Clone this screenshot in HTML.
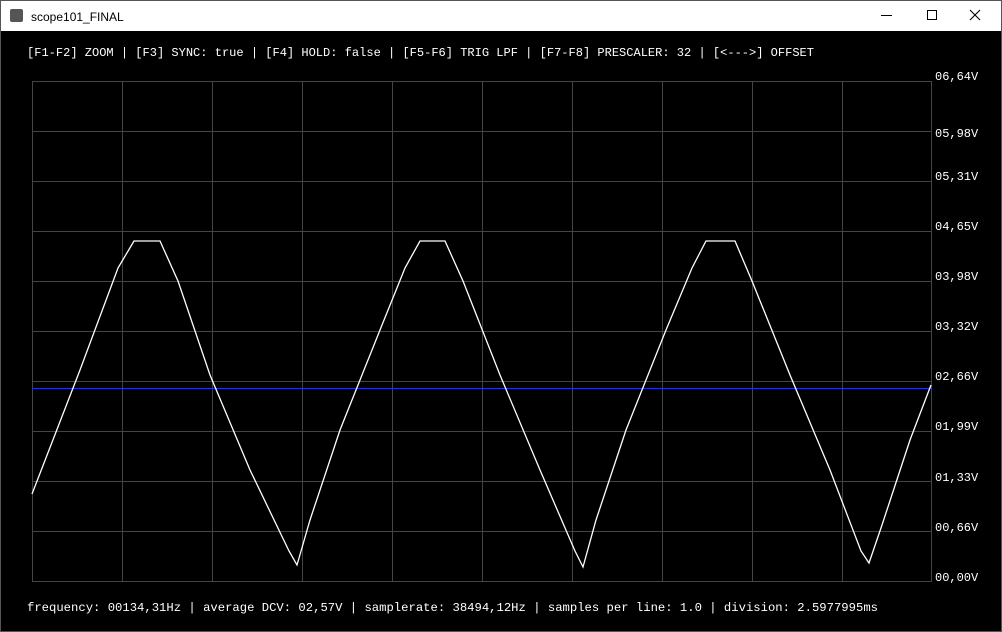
<!DOCTYPE html>
<html><head><meta charset="utf-8"><style>
html,body{margin:0;padding:0;width:1002px;height:632px;overflow:hidden;background:#000}
</style></head><body>
<svg width="1002" height="632" xmlns="http://www.w3.org/2000/svg">
<rect x="0" y="0" width="1002" height="632" fill="#000"/>
<rect x="0" y="0" width="1002" height="31" fill="#fff"/>
<rect x="0.5" y="0.5" width="1001" height="631" fill="none" stroke="#555"/>
<rect x="10" y="9" width="13" height="13" rx="2" fill="#555"/>
<text x="31" y="21" font-family="Liberation Sans, sans-serif" font-size="12" fill="#000">scope101_FINAL</text>
<line x1="881" y1="15.5" x2="892" y2="15.5" stroke="#000"/>
<rect x="927.5" y="10.5" width="9" height="9" fill="none" stroke="#000"/>
<path d="M970 10 L980 20 M980 10 L970 20" stroke="#000" stroke-width="1.1"/>
<g font-family="Liberation Mono, monospace" font-size="12" fill="#fff">
<text x="27" y="56" textLength="787" lengthAdjust="spacingAndGlyphs">[F1-F2] ZOOM | [F3] SYNC: true | [F4] HOLD: false | [F5-F6] TRIG LPF | [F7-F8] PRESCALER: 32 | [&lt;---&gt;] OFFSET</text>
<text x="27" y="611" textLength="851" lengthAdjust="spacingAndGlyphs">frequency: 00134,31Hz | average DCV: 02,57V | samplerate: 38494,12Hz | samples per line: 1.0 | division: 2.5977995ms</text>
<text x="935" y="80">06,64V</text>
<text x="935" y="137">05,98V</text>
<text x="935" y="180">05,31V</text>
<text x="935" y="230">04,65V</text>
<text x="935" y="280">03,98V</text>
<text x="935" y="330">03,32V</text>
<text x="935" y="380">02,66V</text>
<text x="935" y="430">01,99V</text>
<text x="935" y="481">01,33V</text>
<text x="935" y="531">00,66V</text>
<text x="935" y="581">00,00V</text>
</g>
<g stroke="#444" stroke-width="1" fill="none">
<rect x="32.5" y="81.5" width="899" height="500"/>
<path d="M122.5 81V581M212.5 81V581M302.5 81V581M392.5 81V581M482.5 81V581M572.5 81V581M662.5 81V581M752.5 81V581M842.5 81V581"/>
<path d="M32 131.5H931M32 181.5H931M32 231.5H931M32 281.5H931M32 331.5H931M32 381.5H931M32 431.5H931M32 481.5H931M32 531.5H931"/>
</g>
<line x1="32" y1="388.5" x2="931" y2="388.5" stroke="#2233dd" stroke-width="1"/>
<polyline fill="none" stroke="#fff" stroke-width="1.3" points="32,494 80,370 118,268 134,241 160,241 178,281 210,375 250,470 289,551 297,565 310,520 340,430 380,330 405,268 420,241 445,241 463,281 500,375 540,470 575,551 583,567 596,520 626,430 666,330 692,268 706,241 735,241 752,281 790,375 830,470 861,551 869,563 882,525 910,440 931,385"/>
</svg>
</body></html>
